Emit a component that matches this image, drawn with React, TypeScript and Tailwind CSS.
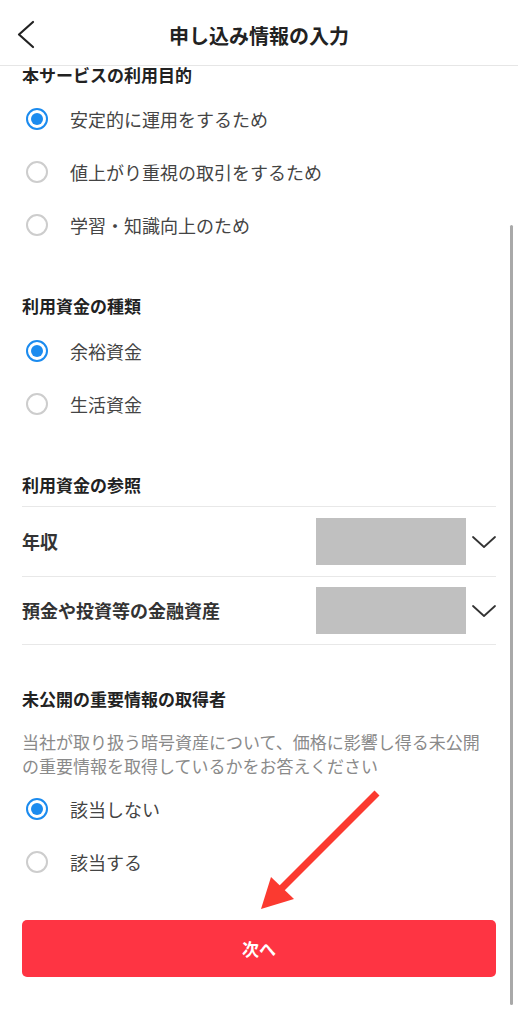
import React from "react";

function Radio({ checked, label }: { checked: boolean; label: string }) {
  return (
    <div className="flex h-[53px] items-center">
      {checked ? (
        <span className="ml-[4px] flex h-[22px] w-[22px] items-center justify-center rounded-full border-[2.5px] border-[#1b8bef]">
          <span className="h-[12px] w-[12px] rounded-full bg-[#1b8bef]"></span>
        </span>
      ) : (
        <span className="ml-[4px] h-[22px] w-[22px] rounded-full border-[2.5px] border-[#cdcdcd]"></span>
      )}
      <span className="ml-[22px] text-[18px] leading-[24px] text-[#444]">
        {label}
      </span>
    </div>
  );
}

function Heading({ children, className }: { children: React.ReactNode; className?: string }) {
  return (
    <h2 className={`text-[17px] font-bold leading-[18px] text-[#222] ${className ?? ""}`}>
      {children}
    </h2>
  );
}

function SelectRow({ label, height }: { label: string; height: string }) {
  return (
    <div className={`flex items-center border-b border-[#e8e8e8] ${height}`}>
      <span className="flex-1 text-[18px] font-bold text-[#333]">{label}</span>
      <div className="h-[47px] w-[150px] bg-[#c0c0c0]"></div>
      <svg className="ml-[6px] h-[14px] w-[24px]" viewBox="0 0 24 14" fill="none">
        <polyline
          points="1,2 12,12 23,2"
          stroke="#333"
          strokeWidth="1.8"
          strokeLinecap="round"
          strokeLinejoin="round"
        />
      </svg>
    </div>
  );
}

export default function App() {
  return (
    <div className="relative min-h-[1024px] w-full bg-white font-['Noto_Sans_CJK_JP','Noto_Sans',sans-serif]">
      {/* header */}
      <header className="relative flex h-[66px] items-center justify-center border-b border-[#e6e6e6] pt-[6px]">
        <svg
          className="absolute left-[16px] top-[20px] h-[30px] w-[20px]"
          viewBox="0 0 20 30"
          fill="none"
        >
          <polyline
            points="17,2 3,14.5 17,27"
            stroke="#222"
            strokeWidth="2.2"
            strokeLinecap="round"
            strokeLinejoin="round"
          />
        </svg>
        <h1 className="text-[20px] font-bold text-[#222]">申し込み情報の入力</h1>
      </header>

      <main className="px-[22px]">
        <Heading>本サービスの利用目的</Heading>
        <div className="mt-[8px]">
          <Radio checked label="安定的に運用をするため" />
          <Radio checked={false} label="値上がり重視の取引をするため" />
          <Radio checked={false} label="学習・知識向上のため" />
        </div>

        <Heading className="mt-[46px]">利用資金の種類</Heading>
        <div className="mt-[9px]">
          <Radio checked label="余裕資金" />
          <Radio checked={false} label="生活資金" />
        </div>

        <Heading className="mt-[46px]">利用資金の参照</Heading>
        <div className="mt-[12px] h-px bg-[#e8e8e8]"></div>
        <SelectRow label="年収" height="h-[70px]" />
        <SelectRow label="預金や投資等の金融資産" height="h-[68px]" />

        <Heading className="mt-[45px]">未公開の重要情報の取得者</Heading>
        <p className="mt-[22px] text-[17px] leading-[24px] text-[#8a8a8a] whitespace-nowrap">
          当社が取り扱う暗号資産について、価格に影響し得る未公開
          <br />
          の重要情報を取得しているかをお答えください
        </p>
        <div className="mt-[4px]">
          <Radio checked label="該当しない" />
          <Radio checked={false} label="該当する" />
        </div>

        <button className="mt-[32px] flex h-[57px] w-full items-center justify-center rounded-[5px] bg-[#fe3443] text-[17px] font-bold text-white">
          次へ
        </button>
      </main>

      {/* scrollbar */}
      <div className="absolute left-[510px] top-[225px] h-[780px] w-[3px] rounded-full bg-[#a9a9a9]"></div>

      {/* annotation arrow */}
      <svg
        className="pointer-events-none absolute left-0 top-0 h-[1024px] w-[518px]"
        viewBox="0 0 518 1024"
        fill="none"
      >
        <line x1="377" y1="793" x2="280" y2="890" stroke="#fb3a30" strokeWidth="7" />
        <polygon points="261,909 271,877 294,899" fill="#fb3a30" />
      </svg>
    </div>
  );
}
